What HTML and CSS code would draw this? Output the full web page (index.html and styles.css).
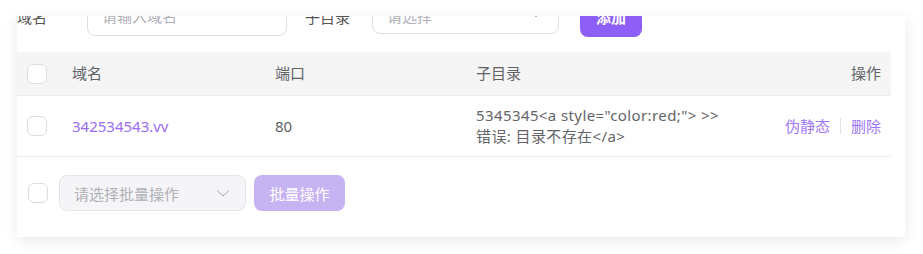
FILE: index.html
```html
<!DOCTYPE html>
<html lang="zh">
<head>
<meta charset="utf-8">
<link rel="stylesheet" href="styles.css">
</head>
<body>
<div class="page">
  <div class="card">
    <div class="form-row">
      <span class="label">域名</span>
      <div class="input"><span class="ph">请输入域名</span></div>
      <span class="label label-sub">子目录</span>
      <div class="select"><span class="ph">请选择</span>
        <svg class="chev" width="12" height="12" viewBox="0 0 12 12"><path d="M2 4l4 4 4-4" fill="none" stroke="#b0b0b8" stroke-width="1"/></svg>
      </div>
      <button class="btn-add">添加</button>
    </div>
    <div class="table">
      <div class="row head">
        <div class="cell cb"><span class="check"></span></div>
        <div class="cell">域名</div>
        <div class="cell">端口</div>
        <div class="cell">子目录</div>
        <div class="cell act">操作</div>
      </div>
      <div class="row body">
        <div class="cell cb"><span class="check"></span></div>
        <div class="cell link">342534543.vv</div>
        <div class="cell">80</div>
        <div class="cell sub">5345345&lt;a style="color:red;"&gt; &gt;&gt;<br>错误: 目录不存在&lt;/a&gt;</div>
        <div class="cell act"><span class="alink">伪静态</span><span class="sep"></span><span class="alink">删除</span></div>
      </div>
    </div>
    <div class="footer">
      <span class="check"></span>
      <div class="bselect"><span class="ph">请选择批量操作</span>
        <svg class="chev" width="14" height="14" viewBox="0 0 14 14"><path d="M1 4.5l6 5.5 6-5.5" fill="none" stroke="#a8a8b0" stroke-width="1"/></svg>
      </div>
      <button class="btn-batch">批量操作</button>
    </div>
  </div>
</div>
</body>
</html>
```

FILE: styles.css
```css
* { box-sizing: border-box; }
html, body { margin: 0; background: #ffffff; }
body {
  font-family: "Noto Sans", "Noto Sans CJK SC", sans-serif;
  font-size: 15px;
  color: #606266;
}
.page {
  padding: 16px 18px 17px 17px;
}
.card {
  background: #fff;
  box-shadow: 0 3px 14px rgba(0, 0, 0, 0.09);
  overflow: hidden;
  height: 221px;
  padding-right: 14px;
}
.form-row {
  display: flex;
  align-items: center;
  height: 42px;
  margin-top: -21px;
  margin-bottom: 15px;
}
.label { width: 70px; color: #555; }
.label-sub { width: auto; margin-left: 18px; margin-right: 22px; }
.input {
  width: 200px; height: 40px; margin-top: -1px;
  border: 1px solid #dcdfe6; border-radius: 8px;
  padding-left: 14px;
  display: flex; align-items: center;
}
.ph { color: #b0b0b8; }
.select {
  width: 187px; height: 38px; margin-top: -2px;
  border: 1px solid #dcdfe6; border-radius: 8px;
  padding: 0 16px 0 14px;
  display: flex; align-items: center; justify-content: space-between;
}
.btn-add {
  margin-left: 21px;
  width: 62px; height: 42px;
  border: none; border-radius: 8px;
  background: #8e5ff6; color: #fff;
  font: inherit; font-weight: 600;
}
.table { width: 874px; }
.row {
  display: grid;
  grid-template-columns: 55px 203px 201px 1fr auto;
  align-items: center;
  border-bottom: 1px solid #ebeaf2;
}
.head { height: 44px; background: #f5f5f5; }
.body { height: 61px; }
.cell { line-height: 21px; }
.cb { padding-left: 10px; display: flex; }
.check {
  display: inline-block;
  width: 20px; height: 20px;
  border: 1px solid #dcdce6; border-radius: 6px;
  background: #fff;
}
.link { color: #9b6cf6; }
.sub { color: #646468; letter-spacing: 0.4px; }
.act { padding-right: 10px; text-align: right; display: flex; align-items: center; justify-content: flex-end; }
.alink { color: #9f77f5; }
.sep { width: 1px; height: 16px; background: #e0e0e6; margin: 0 10px; }
.footer {
  display: flex; align-items: center;
  padding: 18px 0 0 11px;
}
.bselect {
  margin-left: 11px;
  width: 187px; height: 36px;
  background: #f5f5f7;
  border: 1px solid #e4e4ec; border-radius: 8px;
  padding: 0 15px 0 14px;
  display: flex; align-items: center; justify-content: space-between;
}
.btn-batch {
  margin-left: 8px;
  width: 91px; height: 36px;
  border: none; border-radius: 8px;
  background: #c6b3f1; color: #fff;
  font: inherit;
}
```
